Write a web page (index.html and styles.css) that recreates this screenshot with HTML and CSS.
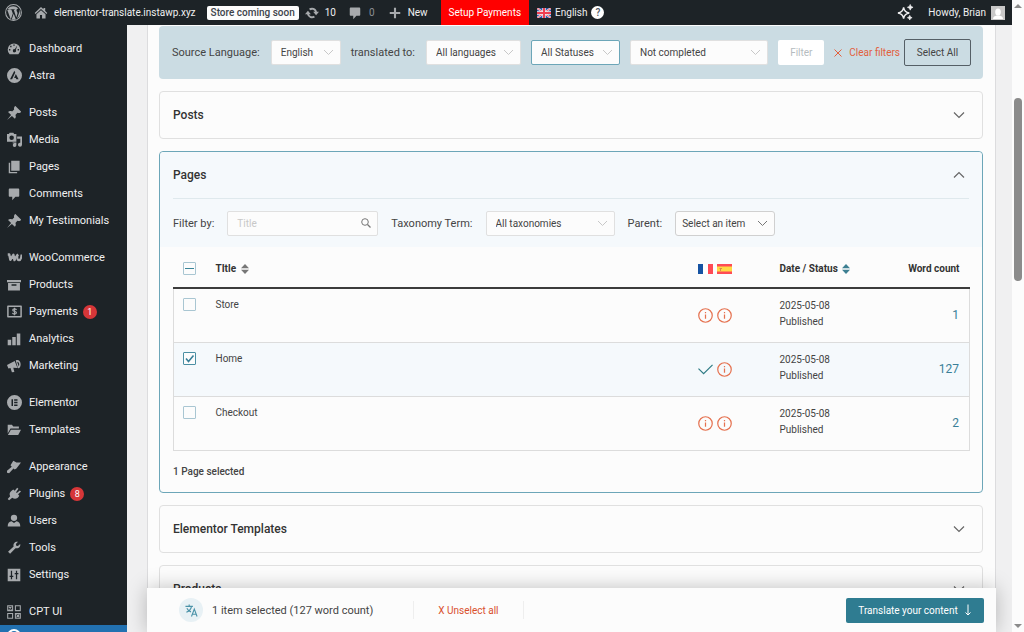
FILE: index.html
```html
<!DOCTYPE html>
<html lang="en">
<head>
  <meta charset="UTF-8" />
  <meta name="viewport" content="width=device-width, initial-scale=1.0"/>
  <title>Translation Dashboard</title>
  <link rel="stylesheet" href="styles.css">
</head>
<body>
  <svg class="defs" aria-hidden="true">
    <symbol id="pin" viewBox="2 2 16 16"><path d="M10.400 3l1-1.200 6.900 6.900-1.200 1c-1 .5-2.200.6-3.200.1l-2.300 2.400c.8 1.500.6 3.300-.6 4.500L7.600 13.300 2 18l4.700-5.700L3.200 8.900c1.300-1.200 3-1.400 4.600-.6l2.400-2.400C9.800 5 9.900 3.900 10.400 3z"/></symbol>
    <symbol id="comment" viewBox="0 0 20 20"><path d="M4 2h12c.8 0 1.500.7 1.500 1.500v9c0 .8-.7 1.500-1.500 1.500h-4L7.500 19v-5H4c-.8 0-1.500-.7-1.500-1.500v-9C2.500 2.700 3.200 2 4 2z"/></symbol>
    <symbol id="chevron" viewBox="0 0 12 8"><path d="M1 1.500l5 5 5-5" fill="none" stroke="currentColor" stroke-width="1.200"/></symbol>
    <symbol id="info" viewBox="0 0 16 16"><circle cx="8" cy="8" r="7.200" fill="none" stroke="currentColor" stroke-width="1.300"/><path d="M8 7v4.500M8 4.300v1.300" stroke="currentColor" stroke-width="1.300"/></symbol>
    <symbol id="done" viewBox="0 0 16 16"><path d="M.5 7l5.500 5.500L15.500 3" fill="none" stroke="currentColor" stroke-width="1.300"/></symbol>
    <symbol id="sort" viewBox="0 0 8 10"><path d="M0 4.200L4 0l4 4.200z"/><path class="down" d="M0 5.800L4 10l4-4.200z"/></symbol>
  </svg>

  <div class="screen">
    <header class="adminbar">
      <a href="#" class="wp" aria-label="About WordPress">
        <svg viewBox="0 0 20 20"><circle cx="10" cy="10" r="9.300" fill="none" stroke="currentColor" stroke-width="1.200"/><path d="M2.700 7.200l4.100 11L9.200 11.200 7.600 6.900H6.400V6.200h5.200v.7h-1.300l3 9 1.200-4c.7-2.200-.9-3-.9-4.500 0-1.200.9-2.100 2-2.100A8 8 0 0 0 3.500 5.400L3.200 6.200h1.900v.7H3.600zM10.200 11.500L7.900 18.100a8.200 8.200 0 0 0 4.900 0zM17.300 6.500c.2 2-.6 3.600-1.100 5.100l-2 5.500c3.400-2.100 4.800-6.500 3.100-10.600z"/></svg>
      </a>
      <a href="#" class="site">
        <svg viewBox="0 0 20 20"><path d="M10 1.500l3.500 3.300V3H16v4.200l3 2.900-1.200 1.300L10 4.300l-7.800 7.100L1 10.100zM10 6l6.500 5.900V18h-5v-5h-3v5h-5v-6.100z"/></svg>
        elementor-translate.instawp.xyz
      </a>
      <a href="#" class="soon">Store coming soon</a>
      <a href="#" class="updates">
        <svg viewBox="0 0 20 20"><path d="M10 2.500c3.500 0 6.300 2.400 7.100 5.600H20l-4.200 5-4.200-5h2.700A4.600 4.600 0 0 0 7.500 6.100L5.700 3.900A7.300 7.300 0 0 1 10 2.500zM4.200 6.900l4.200 5H5.700a4.600 4.600 0 0 0 6.800 2l1.800 2.200A7.300 7.300 0 0 1 2.900 11.900H0z"/></svg>
        10
      </a>
      <a href="#" class="bubble"><svg><use href="#comment"/></svg>0</a>
      <a href="#" class="new"><svg viewBox="0 0 20 20"><path d="M8.500 2.500h3v6h6v3h-6v6h-3v-6h-6v-3h6z"/></svg>New</a>
      <a href="#" class="setup">Setup Payments</a>
      <a href="#" class="lang">
        <svg class="flag" viewBox="0 0 14 10"><path fill="#2b54a5" d="M0 0h14v10H0z"/><path d="M0 0l14 10M14 0L0 10" stroke="#f3dfe3" stroke-width="2"/><path d="M0 0l14 10M14 0L0 10" stroke="#ef4a5b" stroke-width=".8"/><path d="M7 0v10M0 5h14" stroke="#f7eaed" stroke-width="3.400"/><path d="M7 0v10M0 5h14" stroke="#ee3f52" stroke-width="2"/></svg>
        English
        <span class="help">?</span>
      </a>
      <a href="#" class="sparkle" aria-label="Assistant">
        <svg viewBox="0 0 18 18"><path d="M7 3.500Q7.800 8.700 13 9.500 7.800 10.300 7 15.500 6.200 10.300 1 9.500 6.200 8.700 7 3.500z" fill="none" stroke="currentColor" stroke-width="1.500"/><path d="M14 .5q.4 2.600 3 3-2.600.4-3 3-.4-2.600-3-3 2.600-.4 3-3zM13.500 12q.3 2.200 2.500 2.500-2.200.3-2.500 2.500-.3-2.200-2.500-2.500 2.200-.3 2.500-2.500z" stroke="currentColor" stroke-width=".7"/></svg>
      </a>
      <a href="#" class="account">Howdy, Brian
        <svg viewBox="0 0 14 14"><path fill="#c8c8c8" d="M0 0h14v14H0z"/><ellipse cx="7" cy="6" rx="2.800" ry="3.500" fill="#fff"/><path fill="#fff" d="M2 13c0-2.500 2-3 3.500-3.500h3C10 10 12 10.500 12 13z"/></svg>
      </a>
    </header>

    <div class="wrap">
      <nav class="menu">
        <ul>
          <li><a href="#"><svg viewBox="0 0 20 20"><path fill-rule="evenodd" d="M3.800 17.500a9 9 0 1 1 12.400 0zM9 3.500h2v2H9zM4.500 5.500h2v2h-2zM2.800 10h2v2h-2zM15.200 10h2v2h-2zM14.800 4.800l-3.700 5.400a2.300 2.300 0 1 0 1.500 1.100z"/></svg>Dashboard</a></li>
          <li><a href="#"><svg class="big" viewBox="0 0 20 20"><path fill-rule="evenodd" d="M10 0a10 10 0 1 0 0 20 10 10 0 0 0 0-20zM9.800 3.500L11 6 6.800 15H4zM11.800 8l3.700 7h-3l-.8-1.700h-2.200z"/></svg>Astra</a></li>
        </ul>
        <ul>
          <li><a href="#"><svg><use href="#pin"/></svg>Posts</a></li>
          <li><a href="#"><svg class="big" viewBox="0 0 20 20"><path fill-rule="evenodd" d="M0 2.500h2.500L3.500 1h5l1 1.500h3V13H0zM6.200 4.700a3 3 0 1 0 0 6 3 3 0 0 0 0-6zM13.500 6H20v11a2.700 2.700 0 1 1-2.300-2.700V9h-4.200zM7.500 14h5v3.500a2.400 2.400 0 1 1-2.200-2.400H7.500z"/></svg>Media</a></li>
          <li><a href="#"><svg viewBox="0 0 20 20"><path d="M6 1h12v14.500H6zM2.500 4h2v13h10v2h-12z"/></svg>Pages</a></li>
          <li><a href="#"><svg><use href="#comment"/></svg>Comments</a></li>
          <li><a href="#"><svg><use href="#pin"/></svg>My Testimonials</a></li>
        </ul>
        <ul>
          <li><a href="#"><svg class="big" viewBox="0 0 20 20"><path d="M1 6h2L4.500 13 8.500 6.500 10 13.500C11.500 9.500 13 7.500 15 6" fill="none" stroke="currentColor" stroke-width="3.200" stroke-linejoin="round"/><path d="M13.500 7.500c0 3.500.5 6 2.500 6s3-2.500 3.500-7.500" fill="none" stroke="currentColor" stroke-width="3"/></svg>WooCommerce</a></li>
          <li><a href="#"><svg viewBox="0 0 20 20"><path fill-rule="evenodd" d="M0 3h20v3H0zM1.500 7h17v11h-17zM6.500 9v2h7V9z"/></svg>Products</a></li>
          <li><a href="#"><svg class="big" viewBox="0 0 20 20"><path d="M1.200 3h17.600v14H1.200z" fill="none" stroke="currentColor" stroke-width="2" stroke-linejoin="round"/><path d="M12.600 8c-.4-1-1.300-1.400-2.600-1.400-3 0-3.300 2.900 0 3.300 3.500.4 3.300 3.500 0 3.500-1.500 0-2.400-.6-2.800-1.600M10 5v10" fill="none" stroke="currentColor" stroke-width="1.600"/></svg>Payments <span class="count">1</span></a></li>
          <li><a href="#"><svg viewBox="0 0 20 20"><path d="M1 11h5v8H1zM7.500 7h5v12h-5zM14 2h5v17h-5z"/></svg>Analytics</a></li>
          <li><a href="#"><svg viewBox="0 0 20 20"><path fill-rule="evenodd" d="M0 8.500L11 3l4 10-6-.6 1.500 6.100-3.500.5-2-6.300-3 .8zM12.500 2C16 0 19.500 3 19.500 7.500S17 14 15.500 13zM14.500 4l2.200 6.500c1.800-2 .5-6.500-2.200-6.500z"/></svg>Marketing</a></li>
        </ul>
        <ul>
          <li><a href="#"><svg class="big" viewBox="0 0 20 20"><path fill-rule="evenodd" d="M10 0a10 10 0 1 0 0 20 10 10 0 0 0 0-20zM6 5.500h2v9H6zM9.500 5.500H14v2H9.500zM9.500 9H14v2H9.500zM9.500 12.500H14v2H9.500z"/></svg>Elementor</a></li>
          <li><a href="#"><svg viewBox="0 0 20 20"><path d="M1 2.500h6l2 2.500h8v3H5L1 15zM5.500 9.500H20L16 17H1.300z"/></svg>Templates</a></li>
        </ul>
        <ul>
          <li><a href="#"><svg viewBox="0 0 20 20"><path d="M9 1l4.500 2.500H20L13.500 12l-2.500 1.500L9.300 12 3 19 0 18.200v-2.700L6.800 9.500 5 7.500z"/></svg>Appearance</a></li>
          <li><a href="#"><svg viewBox="0 0 20 20"><path d="M7 5l2-1.500 2 2L14.500 1l1.800 1.500-3.300 4.900 1 1 4.300-3.500L20 6.500l-4.200 4 1.700 2c-2 4.500-6.500 5.500-10 3L3 19l-2-2 3.500-3.800C2.800 10 4 7 7 5z"/></svg>Plugins <span class="count">8</span></a></li>
          <li><a href="#"><svg viewBox="0 0 20 20"><circle cx="10" cy="5.500" r="4.500"/><path d="M1 18c0-5 2-7 5.500-7.500L10 13l3.500-2.500C17 11 19 13 19 18z"/></svg>Users</a></li>
          <li><a href="#"><svg viewBox="0 0 20 20"><path d="M15.700 1.200l-3 3.200.5 2.400 2.400.5 3.200-3.100c1 3.300-1.600 6.700-5.500 6.300l-1.200-.2-7.700 8-2.900-2.800 8-7.700C8.200 3.500 12 .2 15.700 1.200z"/></svg>Tools</a></li>
          <li><a href="#"><svg viewBox="0 0 20 20"><path fill-rule="evenodd" d="M1 1h18v18H1zM5.500 4v7H3.700v1.800h1.800V16h1.800v-3.200H9V11H7.300V4zM12.700 4v3H11v1.800h1.700V16h1.800V8.800h1.800V7h-1.800V4z"/></svg>Settings</a></li>
        </ul>
        <ul>
          <li><a href="#"><svg viewBox="0 0 20 20"><path d="M1 1h7v7H1zM12 1h7v7h-7zM1 12h7v7H1zM12 12h7v7h-7zM2.500 2.500l4 4M6.500 2.500l-4 4M13.500 13.500l4 4M17.500 13.500l-4 4" fill="none" stroke="currentColor" stroke-width="1.500"/></svg>CPT UI</a></li>
          <li class="current"><a href="#" aria-label="WPML"><svg viewBox="0 0 20 20"><circle cx="10" cy="10" r="8.500" fill="none" stroke="currentColor" stroke-width="3"/></svg></a></li>
        </ul>
      </nav>

      <main class="main">
        <div class="panel">
          <form class="filters">
            <label for="source">Source Language:</label>
            <select id="source"><option>English</option></select>
            <label for="target">translated to:</label>
            <select id="target" class="target"><option>All languages</option></select>
            <select class="statuses" aria-label="Status"><option>All Statuses</option></select>
            <select class="progress" aria-label="Progress"><option>Not completed</option></select>
            <button type="button" class="filter" disabled>Filter</button>
            <button type="button" class="clear"><svg viewBox="0 0 8 8"><path d="M.5.5l7 7M7.500.5l-7 7" stroke="currentColor"/></svg>Clear filters</button>
            <button type="button" class="select-all">Select All</button>
          </form>

          <section class="card">
            <h2>Posts <svg><use href="#chevron"/></svg></h2>
          </section>

          <section class="card open">
            <div class="card-top">
              <h2>Pages <svg class="flip"><use href="#chevron"/></svg></h2>
              <form class="card-filters">
                <label for="title">Filter by:</label>
                <div class="search">
                  <input type="text" id="title" placeholder="Title">
                  <svg viewBox="0 0 10 10"><circle cx="4" cy="4" r="3.300" fill="none" stroke="currentColor"/><path d="M6.500 6.500l3 3" stroke="currentColor" stroke-width="1.200"/></svg>
                </div>
                <label for="taxonomy">Taxonomy Term:</label>
                <select id="taxonomy" class="taxonomy"><option>All taxonomies</option></select>
                <label for="parent">Parent:</label>
                <select id="parent" class="parent"><option>Select an item</option></select>
              </form>
            </div>

            <table class="items">
              <thead>
                <tr>
                  <th class="check"><input type="checkbox" class="some" aria-label="Select all pages"></th>
                  <th>TItle <svg class="sort"><use href="#sort"/></svg></th>
                  <th class="langs">
                    <svg viewBox="0 0 15 10"><path fill="#fff" d="M0 0h15v10H0z"/><path fill="#1653a3" d="M0 0h5v10H0z"/><path fill="#ff4b55" d="M10 0h5v10h-5z"/></svg>
                    <svg viewBox="0 0 15 10"><path fill="#ff4b55" d="M0 0h15v10H0z"/><path fill="#ffda44" d="M0 2.500h15v5H0z"/><path fill="#d98a4a" d="M2.500 4h2.500v1H4v2H3V5h-.5z"/></svg>
                  </th>
                  <th class="date">Date / Status <svg class="sort desc"><use href="#sort"/></svg></th>
                  <th class="words">Word count</th>
                </tr>
              </thead>
              <tbody>
                <tr>
                  <td><input type="checkbox" aria-label="Select Store"></td>
                  <td>Store</td>
                  <td class="langs"><svg><use href="#info"/></svg> <svg><use href="#info"/></svg></td>
                  <td class="date">2025-05-08<br>Published</td>
                  <td class="words">1</td>
                </tr>
                <tr class="selected">
                  <td><input type="checkbox" aria-label="Select Home" checked></td>
                  <td>Home</td>
                  <td class="langs"><svg class="ok"><use href="#done"/></svg> <svg><use href="#info"/></svg></td>
                  <td class="date">2025-05-08<br>Published</td>
                  <td class="words">127</td>
                </tr>
                <tr>
                  <td><input type="checkbox" aria-label="Select Checkout"></td>
                  <td>Checkout</td>
                  <td class="langs"><svg><use href="#info"/></svg> <svg><use href="#info"/></svg></td>
                  <td class="date">2025-05-08<br>Published</td>
                  <td class="words">2</td>
                </tr>
              </tbody>
            </table>
            <p class="summary">1 Page selected</p>
          </section>

          <section class="card">
            <h2>Elementor Templates <svg><use href="#chevron"/></svg></h2>
          </section>

          <section class="card">
            <h2>Products <svg><use href="#chevron"/></svg></h2>
          </section>
        </div>

        <div class="basket">
          <span class="badge"><svg viewBox="0 0 14 14"><path d="M.5 2.500h8M4.500.5v2M1.500 9c3-1.500 5-3.500 5.500-6.500M2 4.500C3 6.500 4.500 8 6.500 8.500M7 13.500l3-8 3 8M8 11h4" fill="none" stroke="currentColor" stroke-width="1.200"/></svg></span>
          <span class="picked">1 item selected (127 word count)</span>
          <button type="button" class="unselect">X Unselect all</button>
          <button type="button" class="translate">Translate your content <svg viewBox="0 0 8 12"><path d="M4 .5v10.500M1.500 8.500L4 11l2.500-2.500" fill="none" stroke="currentColor"/></svg></button>
        </div>
      </main>
    </div>
  </div>

  <div class="scroll" aria-hidden="true">
    <i class="arrow-up"></i>
    <i class="thumb"></i>
    <i class="arrow-down"></i>
  </div>
</body>
</html>
```
FILE: styles.css
```css
* { box-sizing: border-box; }
body {
  margin: 0; height: 100vh; overflow: hidden;
  display: flex;
  font-family: Roboto, Arial, sans-serif; font-size: 10px;
  color: #444; background: #fcfcfc;
}
a { color: inherit; text-decoration: none; }
svg { fill: currentColor; flex: none; }
.defs { display: none; }
h2, p, ul { margin: 0; padding: 0; }
button, input, select { font: inherit; color: inherit; margin: 0; }
button { border: 0; background: none; padding: 0; }

.screen { flex: 1; min-width: 0; display: flex; flex-direction: column; }

/* top bar */
.adminbar {
  height: 25px; flex: none;
  display: flex; align-items: center;
  background: #1d2327; color: #f0f0f1;
  padding: 0 7px 0 5px;
}
.adminbar a { display: flex; align-items: center; white-space: nowrap; }
.adminbar svg { width: 14px; height: 14px; color: #a7aaad; }
.adminbar .wp svg { width: 17px; height: 17px; }
.site { gap: 6px; margin-left: 12px; }
.adminbar .soon {
  background: #fcfcfc; color: #3c434a; font-weight: 500;
  height: 14px; padding: 0 4px; margin-left: 11px; border-radius: 2px;
}
.updates { gap: 6px; margin-left: 6px; }
.bubble { gap: 7px; margin-left: 12px; color: #8c8f94; }
.new { gap: 6px; margin-left: 13px; }
.adminbar .setup {
  align-self: stretch; background: #f00; color: #fff;
  padding: 0 8px; margin-left: 13px;
}
.lang { gap: 4px; margin-left: 8px; }
.adminbar .flag { height: 10px; }
.help {
  width: 13px; height: 13px; border-radius: 50%;
  background: #fff; color: #50575e;
  line-height: 13px; text-align: center; font-weight: 500;
}
.sparkle { margin-left: auto; }
.adminbar .sparkle svg { width: 17px; height: 17px; color: #f0f0f1; }
.account { gap: 5px; margin-left: 14px; }

.wrap { flex: 1; min-height: 0; display: flex; }

/* side menu */
.menu {
  width: 127px; flex: none; overflow: hidden;
  background: #1d2327; color: #f0f0f1;
  padding-top: 10px; font-size: 11px;
}
.menu ul { list-style: none; margin-bottom: 10px; }
.menu a { display: flex; align-items: center; height: 27px; padding-left: 7px; gap: 8px; }
.menu svg { width: 14px; height: 14px; color: #a7aaad; }
.menu .big { width: 15px; height: 15px; margin-right: -1px; }
.count {
  width: 14px; height: 14px; border-radius: 50%;
  background: #d63638; color: #fff;
  font-size: 9px; line-height: 14px; text-align: center;
  margin-left: -3px;
}
.current { background: #2271b1; }
.menu .current a { align-items: flex-start; padding-top: 4px; }
.menu .current svg { color: #fff; }

/* content */
.main { flex: 1; min-width: 0; position: relative; overflow: hidden; background: #f0f0f1; padding: 0 16px 0 20px; }
.panel {
  min-height: 100%;
  background: #fcfcfc; border: 1px solid #dcdcde; border-width: 0 1px;
  padding: 1px 12px 0 11px;
}
label { white-space: nowrap; font-size: 11px; }
select {
  appearance: none; height: 25px; padding: 0 9px;
  border: 1px solid #e0e0e0; border-radius: 2px;
  background: #fcfcfc url("data:image/svg+xml,%3Csvg xmlns='http://www.w3.org/2000/svg' width='11' height='7'%3E%3Cpath d='M1 1l4.500 4.500L10 1' fill='none' stroke='%23c8c8c8'/%3E%3C/svg%3E") no-repeat right 6px center;
}
.filters {
  display: flex; align-items: center;
  height: 53px; padding: 0 12px 0 13px;
  background: #cbdce3; border-radius: 4px;
}
.filters select { width: 70px; margin: 0 10px; }
.filters label + select { margin-left: 11px; }
.filters .target { width: 95px; margin-right: 0; }
.filters .statuses { width: 89px; border-color: #6ca6b8; }
.filters .progress { flex: 1; margin: 0; }
.filter {
  width: 46px; height: 25px; margin: 0 10px;
  background: #fff; color: #b5bcc0; border-radius: 2px;
}
.clear { display: flex; align-items: center; gap: 7px; color: #e2603d; white-space: nowrap; }
.clear svg { width: 8px; height: 8px; }
.select-all {
  width: 67px; height: 27px; margin-left: 4px;
  border: 1px solid #555f66; border-radius: 2px;
}

.card { border: 1px solid #e0e0e0; border-radius: 4px; margin-top: 12px; }
.card h2 {
  display: flex; align-items: center; justify-content: space-between;
  height: 46px; padding: 0 17px 0 13px;
  font-size: 12px; font-weight: 500; color: #333;
}
.card h2 svg { width: 12px; height: 8px; color: #666; }
.card h2 .flip { transform: rotate(180deg); }
.open { border-color: #6ca6b8; }
.card-top { background: #f5f9fc; border-radius: 4px 4px 0 0; }
.card-filters {
  display: flex; align-items: center;
  margin: 0 13px; height: 49px;
  border-top: 1px solid #dfe9ed;
}
.card-filters label { margin-right: 13px; }
.card-filters select, .search { margin-right: 13px; }
.search { position: relative; width: 151px; color: #777; }
.search input {
  width: 100%; height: 25px; padding: 0 9px;
  border: 1px solid #e0e0e0; border-radius: 2px; background: #fcfcfc;
}
.search input::placeholder { color: #c8c8c8; }
.search svg { position: absolute; right: 7px; top: 7px; width: 10px; height: 10px; }
.taxonomy { width: 129px; }
.parent {
  width: 100px; padding: 0 6px; border-color: #d0d0d0; border-radius: 3px;
  background-image: url("data:image/svg+xml,%3Csvg xmlns='http://www.w3.org/2000/svg' width='11' height='7'%3E%3Cpath d='M1 1l4.500 4.500L10 1' fill='none' stroke='%23777777'/%3E%3C/svg%3E");
}

.items { width: calc(100% - 25px); margin: 0 12px 0 13px; border-collapse: collapse; table-layout: fixed; }
.items th { height: 41px; padding: 3px 0 0; text-align: left; font-weight: 700; color: #333; border-bottom: 2px solid #3c3c3c; white-space: nowrap; }
.items td { height: 54px; padding: 9px 0 0; vertical-align: top; line-height: 14px; }
.items tbody { border: 1px solid #dcdcdc; border-top: 0; }
.items tbody tr { border-bottom: 1px solid #dcdcdc; }
.items .selected { background: #f5f9fc; }
.items .check { width: 42px; }
.items td:first-child, .items th:first-child { padding-left: 9px; }
.items .langs { width: 82px; }
.items .langs svg { width: 15px; height: 15px; color: #e5714f; vertical-align: middle; margin-right: 2px; }
.items th.langs svg { height: 10px; }
.items .langs .ok { color: #2f7c85; }
.items td.langs { vertical-align: middle; padding: 0; }
.items .date { width: 115px; }
.items td.date { line-height: 16px; }
.items .words { width: 75px; text-align: right; padding-right: 10px; }
.items td.words { vertical-align: middle; padding-top: 0; font-size: 12px; color: #3a7f98; }
.sort { width: 8px; height: 10px; margin-left: 2px; vertical-align: -2px; color: #777; }
.desc .down, .desc { color: #3d7f92; }
input[type="checkbox"] {
  appearance: none; display: block; width: 13px; height: 13px;
  border: 1px solid #a9c6d2; border-radius: 1px;
  background: #fcfcfc center no-repeat;
}
input[type="checkbox"].some { background-image: linear-gradient(#3a8599, #3a8599); background-size: 9px 1px; }
input[type="checkbox"]:checked {
  border-color: #4b8fa3;
  background-image: url("data:image/svg+xml,%3Csvg xmlns='http://www.w3.org/2000/svg' width='11' height='11'%3E%3Cpath d='M2 5.500l2.500 3L9.500 2.500' fill='none' stroke='%233a7f98' stroke-width='1.600'/%3E%3C/svg%3E");
}
.summary { padding: 0 13px; height: 41px; line-height: 41px; font-weight: 500; }

/* selection bar over the lists */
.basket {
  position: absolute; left: 20px; right: 16px; bottom: 0;
  display: flex; align-items: center;
  height: 44px; padding: 0 12px 0 32px;
  background: #fcfcfc; box-shadow: 0 0 20px rgba(0, 0, 0, .25);
}
.badge {
  width: 24px; height: 24px; border-radius: 50%;
  display: flex; align-items: center; justify-content: center;
  background: #e8f1f5; color: #4a92a8;
}
.badge svg { width: 13px; height: 13px; }
.picked { margin: 0 40px 0 9px; font-size: 11px; white-space: nowrap; }
.unselect { padding: 0 24px; height: 18px; border: 1px solid #eee; border-width: 0 1px; color: #d9502e; white-space: nowrap; }
.translate {
  display: flex; align-items: center; justify-content: center; gap: 6px;
  width: 138px; height: 25px; margin-left: auto;
  background: #2f7c91; color: #fff; border-radius: 2px; white-space: nowrap;
}
.translate svg { width: 8px; height: 12px; }

.scroll {
  width: 12px; flex: none; padding: 4px 0;
  display: flex; flex-direction: column; align-items: center;
  background: #fcfcfc;
}
.scroll i { display: block; }
.arrow-up, .arrow-down { border: 4px solid transparent; }
.arrow-up { border-top: 0; border-bottom-color: #8b8b8b; }
.arrow-down { border-bottom: 0; border-top-color: #8b8b8b; margin-top: auto; }
.thumb { width: 8px; height: 183px; margin-top: 90px; border-radius: 4px; background: #8b8b8b; }
```
